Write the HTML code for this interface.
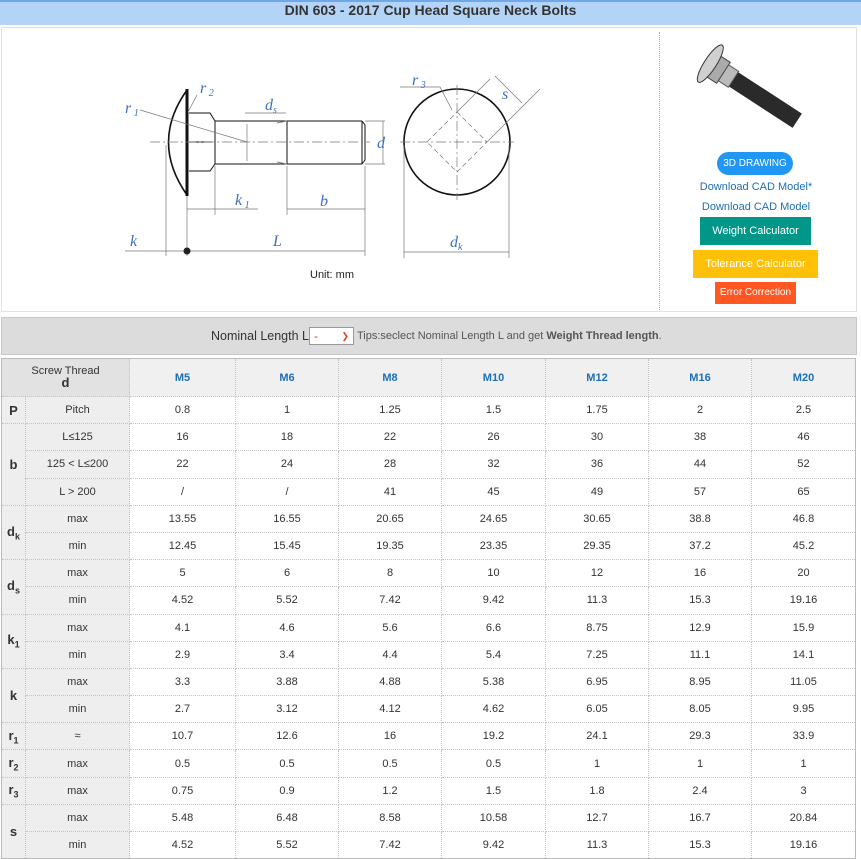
<!DOCTYPE html>
<html><head><meta charset="utf-8"><style>
*{box-sizing:border-box;margin:0;padding:0}
body{width:861px;height:858px;overflow:hidden;background:#fff;font-family:"Liberation Sans",Arial,sans-serif;color:#333;position:relative}
.title{position:absolute;left:0;top:0;width:861px;height:25px;background:#b3d4f7;border-top:2px solid #6fa8e8;text-align:center;font-weight:bold;font-size:14px;line-height:17px;color:#333}
.panel{position:absolute;left:1px;top:27px;width:856px;height:285px;border:1px solid #e2e2e2;background:#fff}
.vdiv{position:absolute;left:657px;top:4px;height:278px;border-left:1px dotted #aaa}
.btn{position:absolute;color:#fff;text-align:center;font-size:11px}
.lnk{position:absolute;color:#1e6fb5;font-size:11px;width:200px;text-align:center}
.bar{position:absolute;left:1px;top:317px;width:856px;height:38px;background:#dcdcdc;border:1px solid #c8c8c8;font-size:12.5px;line-height:36px}
table{position:absolute;left:1px;top:358px;width:855px;border-collapse:collapse;table-layout:fixed;border:1px solid #bbb}
td{border:1px dotted #c4c4c4;text-align:center;font-size:11px;color:#333;height:27.2px;padding:0}
td.h{background:#eee}
tr.hd td{height:38px;background:#f0f0f0;color:#1e6fb5;font-weight:bold}
tr.hd td.h{background:#e2e2e2;color:#333;font-weight:normal;line-height:12px}
td.s{font-weight:bold;font-size:13px;background:#eee}
sub{font-size:9px}
</style></head><body>
<div class="title">DIN 603 - 2017 Cup Head Square Neck Bolts</div>
<div class="panel"><div class="vdiv"></div></div>
<svg style="position:absolute;left:0;top:0" width="660" height="300">
<g fill="none" stroke="#111" stroke-width="1">
<path d="M187 90 Q150 142 187 195" stroke-width="1.6"/>
<line x1="187" y1="89" x2="187" y2="196" stroke-width="3"/>
<path d="M189 113 L210 113 L215 121 L215 164 L210 171 L189 171 M189 142 L212 142"/>
<line x1="215" y1="121" x2="362" y2="121"/><line x1="215" y1="164" x2="362" y2="164"/>
<line x1="287" y1="121" x2="287" y2="164"/><path d="M362 121 L365 125 L365 160 L362 164 M362 121 L362 164"/>
<line x1="277" y1="123" x2="287" y2="121" stroke="#888"/><line x1="277" y1="162" x2="287" y2="164" stroke="#888"/>
</g>
<g stroke="#777" stroke-width="0.7" fill="none">
<line x1="150" y1="142" x2="370" y2="142" stroke-dasharray="10,3,2,3"/>
<line x1="247" y1="124" x2="247" y2="161"/><line x1="245" y1="113" x2="286" y2="113"/>
<line x1="140" y1="110" x2="247" y2="142"/>
<line x1="197" y1="95" x2="188" y2="112"/>
<line x1="365" y1="121" x2="385" y2="121"/><line x1="365" y1="164" x2="385" y2="164"/><line x1="383" y1="121" x2="383" y2="164"/>
<line x1="166" y1="145" x2="166" y2="256"/><line x1="187" y1="196" x2="187" y2="256"/><line x1="365" y1="166" x2="365" y2="256"/>
<line x1="215" y1="166" x2="215" y2="215"/><line x1="287" y1="166" x2="287" y2="215"/>
<line x1="187" y1="209" x2="258" y2="209"/><line x1="287" y1="209" x2="365" y2="209"/>
<line x1="125" y1="251" x2="365" y2="251"/>
<circle cx="457" cy="142" r="53" stroke="#111" stroke-width="1.6"/>
<line x1="400" y1="142" x2="514" y2="142" stroke-dasharray="10,3,2,3"/>
<line x1="457" y1="85" x2="457" y2="200" stroke-dasharray="10,3,2,3"/>
<path d="M457 112 L487 142 L457 172 L427 142 Z" stroke-dasharray="5,3"/>
<line x1="487" y1="142" x2="540" y2="89"/><line x1="457" y1="112" x2="490" y2="79"/><line x1="495" y1="76" x2="522" y2="103"/>
<path d="M400 87 L440 87 L452 110"/>
<line x1="404" y1="145" x2="404" y2="258"/><line x1="509" y1="145" x2="509" y2="258"/><line x1="404" y1="252" x2="509" y2="252"/>
</g>
<circle cx="187" cy="251" r="3.5" fill="#222"/>
<g fill="#3b6fc4" font-family="Liberation Serif,serif" font-style="italic" font-size="16">
<text x="125" y="113">r<tspan font-size="10" dy="3"> 1</tspan></text>
<text x="200" y="93">r<tspan font-size="10" dy="3"> 2</tspan></text>
<text x="265" y="110">d<tspan font-size="10" dy="3">s</tspan></text>
<text x="377" y="148">d</text>
<text x="235" y="205">k<tspan font-size="10" dy="3"> 1</tspan></text>
<text x="320" y="206">b</text>
<text x="130" y="246">k</text>
<text x="273" y="246">L</text>
<text x="412" y="85">r<tspan font-size="10" dy="3"> 3</tspan></text>
<text x="502" y="99">s</text>
<text x="450" y="247">d<tspan font-size="10" dy="3">k</tspan></text>
</g>
<text x="310" y="278" font-size="11" fill="#222">Unit: mm</text>
</svg>
<svg style="position:absolute;left:695px;top:40px" width="120" height="90">
<g transform="rotate(33 22 28)">
<rect x="38" y="20" width="80" height="17" fill="#2a2a2a"/>
<rect x="28" y="19" width="14" height="19" fill="#bbb" stroke="#555"/>
<rect x="18" y="16" width="12" height="25" fill="#aaa" stroke="#444"/>
<ellipse cx="14" cy="28" rx="6" ry="22" fill="#d0d0d0" stroke="#333"/>
</g></svg>
<div class="btn" style="left:717px;top:152px;width:76px;height:23px;border-radius:12px;background:#2196f3;line-height:23px;font-size:10px">3D DRAWING</div>
<div class="lnk" style="left:656px;top:181px">Download CAD Model*</div>
<div class="lnk" style="left:656px;top:201px">Download CAD Model</div>
<div class="btn" style="left:700px;top:217px;width:111px;height:28px;background:#009688;line-height:28px">Weight Calculator</div>
<div class="btn" style="left:693px;top:250px;width:125px;height:28px;background:#ffc107;line-height:28px">Tolerance Calculator</div>
<div class="btn" style="left:715px;top:282px;width:81px;height:22px;background:#ff5722;line-height:22px;font-size:10px">Error Correction</div>
<div class="bar"><span style="position:absolute;left:209px">Nominal Length L</span>
<span style="position:absolute;left:307px;top:9px;width:45px;height:18px;background:#fff;border:1px solid #999;line-height:16px;color:#e04020;font-size:12px;padding-left:4px">-<span style="position:absolute;right:4px;font-size:9px">&#10095;</span></span>
<span style="position:absolute;left:355px;font-size:11px;color:#555">Tips:seclect Nominal Length L and get <b>Weight Thread length</b>.</span></div>
<table>
<colgroup><col style="width:24px"><col style="width:104px"><col style="width:106px"><col style="width:103px"><col style="width:103px"><col style="width:104px"><col style="width:103px"><col style="width:103px"><col></colgroup>
<tr class="hd"><td class="h" colspan="2">Screw Thread<br><b style="font-size:13px">d</b></td><td>M5</td><td>M6</td><td>M8</td><td>M10</td><td>M12</td><td>M16</td><td>M20</td></tr>
<tr><td class="s">P</td><td class="h">Pitch</td><td>0.8</td><td>1</td><td>1.25</td><td>1.5</td><td>1.75</td><td>2</td><td>2.5</td></tr>
<tr><td class="s" rowspan="3">b</td><td class="h">L≤125</td><td>16</td><td>18</td><td>22</td><td>26</td><td>30</td><td>38</td><td>46</td></tr>
<tr><td class="h">125 &lt; L≤200</td><td>22</td><td>24</td><td>28</td><td>32</td><td>36</td><td>44</td><td>52</td></tr>
<tr><td class="h">L &gt; 200</td><td>/</td><td>/</td><td>41</td><td>45</td><td>49</td><td>57</td><td>65</td></tr>
<tr><td class="s" rowspan="2">d<sub>k</sub></td><td class="h">max</td><td>13.55</td><td>16.55</td><td>20.65</td><td>24.65</td><td>30.65</td><td>38.8</td><td>46.8</td></tr>
<tr><td class="h">min</td><td>12.45</td><td>15.45</td><td>19.35</td><td>23.35</td><td>29.35</td><td>37.2</td><td>45.2</td></tr>
<tr><td class="s" rowspan="2">d<sub>s</sub></td><td class="h">max</td><td>5</td><td>6</td><td>8</td><td>10</td><td>12</td><td>16</td><td>20</td></tr>
<tr><td class="h">min</td><td>4.52</td><td>5.52</td><td>7.42</td><td>9.42</td><td>11.3</td><td>15.3</td><td>19.16</td></tr>
<tr><td class="s" rowspan="2">k<sub>1</sub></td><td class="h">max</td><td>4.1</td><td>4.6</td><td>5.6</td><td>6.6</td><td>8.75</td><td>12.9</td><td>15.9</td></tr>
<tr><td class="h">min</td><td>2.9</td><td>3.4</td><td>4.4</td><td>5.4</td><td>7.25</td><td>11.1</td><td>14.1</td></tr>
<tr><td class="s" rowspan="2">k</td><td class="h">max</td><td>3.3</td><td>3.88</td><td>4.88</td><td>5.38</td><td>6.95</td><td>8.95</td><td>11.05</td></tr>
<tr><td class="h">min</td><td>2.7</td><td>3.12</td><td>4.12</td><td>4.62</td><td>6.05</td><td>8.05</td><td>9.95</td></tr>
<tr><td class="s">r<sub>1</sub></td><td class="h">≈</td><td>10.7</td><td>12.6</td><td>16</td><td>19.2</td><td>24.1</td><td>29.3</td><td>33.9</td></tr>
<tr><td class="s">r<sub>2</sub></td><td class="h">max</td><td>0.5</td><td>0.5</td><td>0.5</td><td>0.5</td><td>1</td><td>1</td><td>1</td></tr>
<tr><td class="s">r<sub>3</sub></td><td class="h">max</td><td>0.75</td><td>0.9</td><td>1.2</td><td>1.5</td><td>1.8</td><td>2.4</td><td>3</td></tr>
<tr><td class="s" rowspan="2">s</td><td class="h">max</td><td>5.48</td><td>6.48</td><td>8.58</td><td>10.58</td><td>12.7</td><td>16.7</td><td>20.84</td></tr>
<tr><td class="h">min</td><td>4.52</td><td>5.52</td><td>7.42</td><td>9.42</td><td>11.3</td><td>15.3</td><td>19.16</td></tr>
</table>
</body></html>
